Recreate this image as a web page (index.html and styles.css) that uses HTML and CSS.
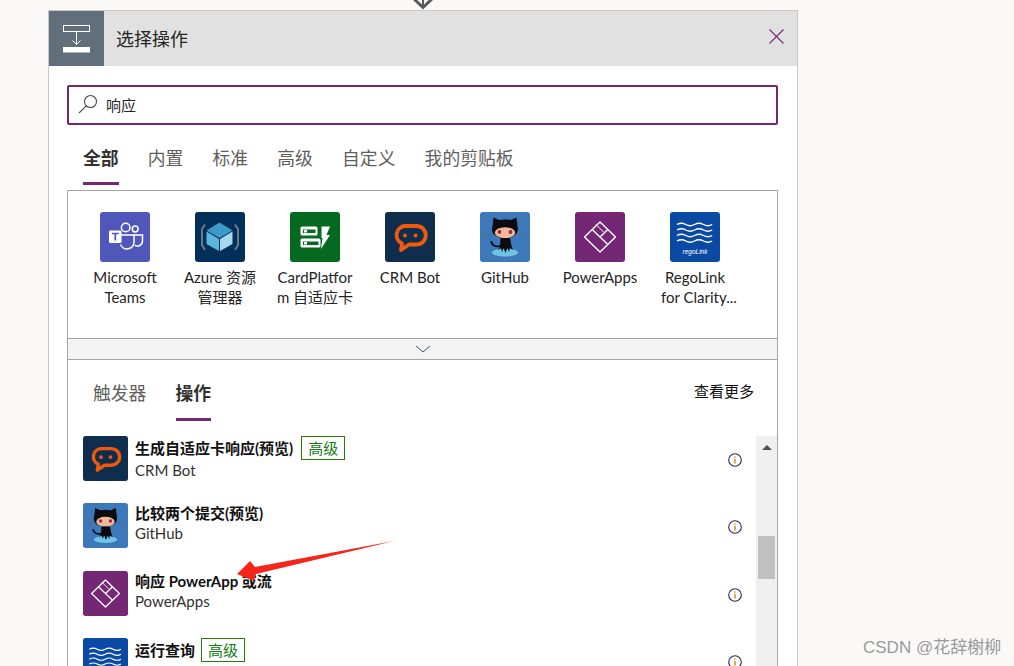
FILE: index.html
```html
<!DOCTYPE html>
<html lang="zh-CN">
<head>
<meta charset="utf-8">
<title>选择操作</title>
<link rel="stylesheet" href="styles.css">
</head>
<body>
<svg class="sprite" aria-hidden="true">
  <symbol id="i-teams" viewBox="0 0 50 50">
    <rect width="50" height="50" rx="3" fill="#4f58ba"/>
    <circle cx="25.7" cy="15.5" r="4.3" fill="none" stroke="#fff" stroke-width="1.5"/>
    <circle cx="35.2" cy="17" r="2.9" fill="none" stroke="#fff" stroke-width="1.5"/>
    <path d="M21 23h13v7a7 7 0 0 1-13.500 2.500" fill="none" stroke="#fff" stroke-width="1.5"/>
    <path d="M34 23h8.500v6a5 5 0 0 1-8 4" fill="none" stroke="#fff" stroke-width="1.500"/>
    <rect x="9" y="18.500" width="12.500" height="12.500" rx="1" fill="#fff"/>
    <path d="M11.800 21.500h7M15.300 21.500v7" stroke="#4f58ba" stroke-width="1.700" fill="none"/>
  </symbol>
  <symbol id="i-azure" viewBox="0 0 50 50">
    <rect width="50" height="50" rx="3" fill="#03305a"/>
    <path d="M24.500 10.500 37.500 18.500 24.500 26 11.500 18.500z" fill="#3d9bc9"/>
    <path d="M11.500 19.500 24 27V39L11.500 32z" fill="#5cb5dd"/>
    <path d="M37.500 19.500 25 27V39L37.500 32z" fill="#a7d8ee"/>
    <path d="M10 12.500 7 17V33L10 38M40 12.500 43 17V33L40 38" fill="none" stroke="#6d7a86" stroke-width="2"/>
  </symbol>
  <symbol id="i-card" viewBox="0 0 50 50">
    <rect width="50" height="50" rx="3" fill="#05691f"/>
    <rect x="10.500" y="14.500" width="17" height="9" rx="1.500" fill="#fff"/>
    <rect x="13" y="17.500" width="12.500" height="3.500" fill="#05691f"/>
    <rect x="14" y="18" width="3" height="2.500" fill="#fff"/>
    <rect x="10.500" y="26.500" width="20" height="9" rx="1.500" fill="#fff"/>
    <rect x="13" y="29.500" width="15.500" height="3.500" fill="#05691f"/>
    <rect x="14" y="30" width="3" height="2.500" fill="#fff"/>
    <path d="M31.500 14.500H40L36.500 23H40L31 37 32.500 26H31.500z" fill="#fff"/>
  </symbol>
  <symbol id="i-crm" viewBox="0 0 50 50">
    <rect width="50" height="50" rx="3" fill="#0f2e4d"/>
    <path d="M19.500 14h12a9 9 0 0 1 0 18.500H24l-8 5.500 1-6.500a9.200 9.200 0 0 1 2.500-17.500z" fill="none" stroke="#f05a0a" stroke-width="3.800" stroke-linejoin="round"/>
    <circle cx="20" cy="23.500" r="2" fill="#f05a0a"/>
    <circle cx="30.500" cy="23.500" r="2" fill="#f05a0a"/>
  </symbol>
  <symbol id="i-github" viewBox="0 0 50 50">
    <rect width="50" height="50" rx="3" fill="#3d78bb"/>
    <ellipse cx="25" cy="40.500" rx="13" ry="4" fill="#6fc4e4"/>
    <path d="M2 22.500h9M39 22.500h9" stroke="#5d6b7a" stroke-width="1"/>
    <path d="M13.500 5.500l5.500 2.500c4-.8 8-.8 12 0l5.500-2.500 1 9c1.500 6-2 11.500-12.500 11.500S10.500 20.500 12.500 14.500z" fill="#0c0c0f"/>
    <ellipse cx="25" cy="20.700" rx="10.200" ry="5.500" fill="#f2b9a0"/>
    <circle cx="19.500" cy="20" r="1.900" fill="#a32b2b"/>
    <circle cx="30.500" cy="20" r="1.900" fill="#a32b2b"/>
    <path d="M20.500 26h9.500l1.500 8 1.500 4-3-2-1 4-1.500-4-2 5-2-5-1.500 4-1-4-3 2 2-4z" fill="#0c0c0f"/>
    <path d="M11 29c1 5 5 6 9 5" fill="none" stroke="#0c0c0f" stroke-width="1.800"/>
  </symbol>
  <symbol id="i-power" viewBox="0 0 50 50">
    <rect width="50" height="50" rx="3" fill="#742774"/>
    <path d="M25 10 40.500 25 25 40 9.500 25z" fill="none" stroke="#fff" stroke-width="1.400" stroke-linejoin="round"/>
    <path d="M17.200 17.500 32.800 32.500M25 25 32.800 17.500" fill="none" stroke="#fff" stroke-width="1.400"/>
    <path d="M21 12.500 28.500 20" fill="none" stroke="#fff" stroke-width="1"/>
  </symbol>
  <symbol id="i-rego" viewBox="0 0 50 50">
    <rect width="50" height="50" rx="3" fill="#0a4aa5"/>
    <path d="M7 12.500q4.400-2.500 8.800 0t8.800 0 8.800 0 8.800 0M7 18q4.400-2.500 8.800 0t8.800 0 8.800 0 8.800 0M7 23.500q4.400-2.500 8.800 0t8.800 0 8.800 0 8.800 0M7 29q4.400-2.500 8.800 0t8.800 0 8.800 0 8.800 0" fill="none" stroke="#fff" stroke-width="1.300"/>
  </symbol>
  <symbol id="i-info" viewBox="0 0 14 14">
    <circle cx="7" cy="7" r="6.300" fill="none" stroke="#2a2a50" stroke-width="1.100"/>
    <path d="M7 6v4.500" stroke="#c47f00" stroke-width="1.300"/>
    <path d="M7 3.500v1.200" stroke="#c47f00" stroke-width="1.300"/>
  </symbol>
</svg>

<div class="page">
  <svg class="connector" width="750" height="10" viewBox="0 0 750 10" aria-hidden="true">
    <path d="M366 -1 375 7.500 384 -1" fill="none" stroke="#5a5a5a" stroke-width="3"/>
    <path d="M375 0V8" stroke="#5a5a5a" stroke-width="2"/>
  </svg>
  <section class="card">
    <header class="card-head">
      <div class="head-icon">
        <svg width="55" height="55" viewBox="0 0 55 55" aria-hidden="true">
          <rect x="14.500" y="14.500" width="26" height="6" fill="none" stroke="#fff" stroke-width="1"/>
          <path d="M27.500 21V33M23.500 29.500 27.500 33.500 31.500 29.500" fill="none" stroke="#fff" stroke-width="1"/>
          <rect x="14" y="36" width="27" height="5.500" fill="#fff"/>
        </svg>
      </div>
      <h1 class="head-title">选择操作</h1>
      <svg class="head-close" width="17" height="17" viewBox="0 0 17 17" aria-hidden="true">
        <path d="M1.500 1.500 15.500 15.500M15.500 1.500 1.500 15.500" stroke="#742774" stroke-width="1.100"/>
      </svg>
    </header>

    <div class="card-body">
      <div class="search">
        <svg width="20" height="20" viewBox="0 0 20 20" aria-hidden="true">
          <circle cx="12.500" cy="7.500" r="6" fill="none" stroke="#4a4a4a" stroke-width="1.100"/>
          <path d="M8.300 11.800 1 19" stroke="#4a4a4a" stroke-width="1.100"/>
        </svg>
        <span class="search-text">响应</span>
      </div>

      <nav class="tabs">
        <span class="tab active">全部</span>
        <span class="tab">内置</span>
        <span class="tab">标准</span>
        <span class="tab">高级</span>
        <span class="tab">自定义</span>
        <span class="tab">我的剪贴板</span>
      </nav>

      <div class="box">
        <div class="tiles">
          <div class="tile"><svg class="tile-icon"><use href="#i-teams"/></svg><span>Microsoft Teams</span></div>
          <div class="tile"><svg class="tile-icon"><use href="#i-azure"/></svg><span>Azure 资源管理器</span></div>
          <div class="tile"><svg class="tile-icon"><use href="#i-card"/></svg><span>CardPlatfor m 自适应卡</span></div>
          <div class="tile"><svg class="tile-icon"><use href="#i-crm"/></svg><span>CRM Bot</span></div>
          <div class="tile"><svg class="tile-icon"><use href="#i-github"/></svg><span>GitHub</span></div>
          <div class="tile"><svg class="tile-icon"><use href="#i-power"/></svg><span>PowerApps</span></div>
          <div class="tile">
            <svg class="tile-icon" viewBox="0 0 50 50"><use href="#i-rego" width="50" height="50"/><text x="25" y="41.500" text-anchor="middle" class="rego-text">regoLink</text></svg>
            <span class="line">RegoLink</span><span class="line line-shift">for Clarity...</span>
          </div>
        </div>
        <div class="expander">
          <svg width="16" height="8" viewBox="0 0 16 8" aria-hidden="true">
            <path d="M1 1 8 7 15 1" fill="none" stroke="#3f5560" stroke-width="1"/>
          </svg>
        </div>
        <div class="lower">
          <div class="lower-head">
            <nav class="tabs tabs-lower">
              <span class="tab">触发器</span>
              <span class="tab active">操作</span>
            </nav>
            <span class="more">查看更多</span>
          </div>
          <div class="results">
            <div class="rows">
              <div class="row">
                <svg class="row-icon"><use href="#i-crm"/></svg>
                <div class="row-text">
                  <div class="row-title"><b>生成自适应卡响应(预览)</b><span class="badge">高级</span></div>
                  <div class="row-sub">CRM Bot</div>
                </div>
                <svg class="info"><use href="#i-info"/></svg>
              </div>
              <div class="row">
                <svg class="row-icon"><use href="#i-github"/></svg>
                <div class="row-text">
                  <div class="row-title"><b>比较两个提交(预览)</b></div>
                  <div class="row-sub">GitHub</div>
                </div>
                <svg class="info"><use href="#i-info"/></svg>
              </div>
              <div class="row">
                <svg class="row-icon"><use href="#i-power"/></svg>
                <div class="row-text">
                  <div class="row-title"><b>响应 PowerApp 或流</b></div>
                  <div class="row-sub">PowerApps</div>
                </div>
                <svg class="info"><use href="#i-info"/></svg>
              </div>
              <div class="row">
                <svg class="row-icon"><use href="#i-rego"/></svg>
                <div class="row-text">
                  <div class="row-title row-title-tight"><b>运行查询</b><span class="badge">高级</span></div>
                </div>
                <svg class="info"><use href="#i-info"/></svg>
              </div>
            </div>
            <div class="scrollbar">
              <span class="scroll-up"></span>
              <span class="scroll-thumb"></span>
            </div>
          </div>
        </div>
      </div>
    </div>
  </section>

  <svg class="annotation" width="1014" height="666" viewBox="0 0 1014 666" aria-hidden="true">
    <path d="M394 541 255 567 250 561 237 574 254 581 256 574z" fill="#f5251c"/>
  </svg>
  <div class="watermark">CSDN @花辞榭柳</div>
</div>
</body>
</html>
```

FILE: styles.css
```css
* { box-sizing: border-box; }

html, body {
  margin: 0;
  padding: 0;
}

body {
  font-family: "Lato", "Noto Sans CJK SC", sans-serif;
  font-size: 15px;
  line-height: 20px;
  color: #252423;
  background: #faf9f8;
}

.sprite {
  position: absolute;
  width: 0;
  height: 0;
}

.rego-text {
  font-family: "Liberation Sans", sans-serif;
  font-size: 6.500px;
  font-style: italic;
  fill: #fff;
}

.page {
  position: relative;
  height: 666px;
  overflow: hidden;
  padding-left: 48px;
}

.connector {
  display: block;
  width: 750px;
  height: 10px;
}

.card {
  width: 750px;
  height: 656px;
  overflow: hidden;
  background: #fff;
  border: 1px solid #c8c8c8;
  border-bottom: 0;
}

.card-head {
  display: flex;
  align-items: center;
  height: 55px;
  background: #e1e1e1;
}

.head-icon {
  width: 55px;
  height: 55px;
  background: #616f7d;
}

.head-icon svg { display: block; }

.head-title {
  margin: 0 0 0 12px;
  flex: 1;
  font-size: 18px;
  font-weight: 400;
  color: #252423;
}

.head-close {
  margin: 0 12px 4px 0;
}

.card-body {
  padding: 19px 19px 0 18px;
}

.search {
  display: flex;
  align-items: center;
  gap: 8px;
  height: 40px;
  padding-left: 9px;
  border: 2px solid #742774;
  border-radius: 2px;
}

.search svg { margin-bottom: 3px; }

.search-text {
  color: #252423;
}

.tabs {
  display: flex;
  gap: 29.200px;
  margin-top: 20px;
  padding-left: 16px;
}

.tab {
  height: 40px;
  padding-bottom: 10px;
  border-bottom: 3px solid transparent;
  font-size: 17.800px;
  line-height: 27px;
  color: #605e5c;
}

.tab.active {
  font-weight: 700;
  color: #323130;
  border-bottom-color: #742774;
}

.box {
  margin-top: 5px;
  height: 480px;
  border: 1px solid #a6a6a6;
  border-bottom: 0;
}

.tiles {
  display: flex;
  gap: 15px;
  height: 147px;
  padding: 21px 0 0 17px;
}

.tile {
  width: 80px;
  text-align: center;
  overflow-wrap: anywhere;
}

.tile-icon {
  display: block;
  width: 50px;
  height: 50px;
  margin: 0 auto 5px;
}

.line {
  display: block;
  white-space: nowrap;
}

.line-shift {
  margin-left: 6px;
}

.expander {
  display: flex;
  align-items: center;
  justify-content: center;
  height: 22px;
  background: #f3f3f3;
  border-top: 1px solid #a6a6a6;
  border-bottom: 1px solid #a6a6a6;
}

.lower-head {
  display: flex;
  justify-content: space-between;
  align-items: flex-start;
  padding-right: 23px;
}

.tabs-lower {
  padding-left: 25px;
}

.tabs-lower .tab {
  height: 41px;
  padding-bottom: 11px;
}

.more {
  margin-top: 21px;
  color: #111;
}

.results {
  display: flex;
  margin-top: 15px;
}

.rows {
  flex: 1;
  display: flex;
  flex-direction: column;
  gap: 22.400px;
  padding: 0 14px 0 15px;
}

.row {
  display: flex;
  align-items: center;
  gap: 7px;
  min-height: 45px;
}

.row-icon {
  flex: none;
  width: 45px;
  height: 45px;
}

.row-text {
  flex: 1;
  align-self: flex-start;
}

.row-title {
  display: flex;
  align-items: center;
  gap: 8px;
  color: #111;
}

.row-title-tight {
  gap: 6px;
}

.row-title b { font-weight: 700; }

.row-sub {
  color: #323130;
}

.badge {
  width: 44px;
  height: 24px;
  border: 1px solid #2b7d00;
  text-align: center;
  line-height: 22px;
  color: #107c10;
}

.info {
  flex: none;
  width: 14px;
  height: 14px;
  margin-top: 3px;
}

.scrollbar {
  display: flex;
  flex-direction: column;
  align-items: center;
  flex: none;
  width: 21px;
  height: 230px;
  background: #f0f0f0;
}

.scroll-up {
  width: 0;
  height: 0;
  margin-top: 9px;
  border-left: 5px solid transparent;
  border-right: 5px solid transparent;
  border-bottom: 5px solid #505050;
}

.scroll-thumb {
  width: 17px;
  height: 43px;
  margin-top: 86px;
  background: #c0c0c0;
}

.annotation {
  position: absolute;
  left: 0;
  top: 0;
  pointer-events: none;
}

.watermark {
  position: absolute;
  left: 863px;
  top: 637px;
  font-family: "Liberation Sans", "Noto Sans CJK SC", sans-serif;
  font-size: 17px;
  line-height: 22px;
  color: #9a9a9a;
}
```
